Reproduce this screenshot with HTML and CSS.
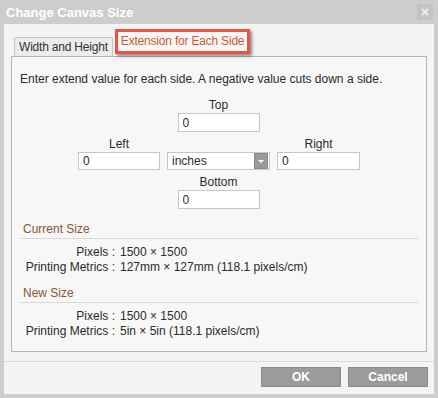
FILE: index.html
```html
<!DOCTYPE html>
<html lang="en">
<head>
    <meta charset="UTF-8">
    <meta name="viewport" content="width=device-width, initial-scale=1.0">
    <title>Change Canvas Size</title>
    <link rel="stylesheet" href="styles.css">
</head>
<body>
    <div class="dialog">
        <div class="titlebar">
            <span class="title">Change Canvas Size</span>
            <span class="close">
                <svg width="8" height="8" viewBox="0 0 8 8"><path d="M1 1 L7 7 M7 1 L1 7" stroke="#ececec" stroke-width="2"/></svg>
            </span>
        </div>

        <div class="dialog-body">
            <div class="tabs">
                <div class="tab">Width and Height</div>
                <div class="tab active">Extension for Each Side</div>
            </div>

            <div class="panel">
                <p class="hint">Enter extend value for each side. A negative value cuts down a side.</p>

                <div class="sides">
                    <span class="side-label top-label">Top</span>
                    <input class="field top-field" type="text" value="0">

                    <span class="side-label left-label">Left</span>
                    <span class="side-label right-label">Right</span>
                    <input class="field left-field" type="text" value="0">
                    <div class="select">
                        <span>inches</span>
                        <span class="select-btn"><svg width="6" height="3" viewBox="0 0 6 3"><path d="M0 0 H6 L3 3 Z" fill="#fff"/></svg></span>
                    </div>
                    <input class="field right-field" type="text" value="0">

                    <span class="side-label bottom-label">Bottom</span>
                    <input class="field bottom-field" type="text" value="0">
                </div>

                <div class="section-title">Current Size</div>
                <div class="info">
                    <span class="info-label">Pixels :</span><span>1500 × 1500</span>
                    <span class="info-label">Printing Metrics :</span><span>127mm × 127mm (118.1 pixels/cm)</span>
                </div>

                <div class="section-title">New Size</div>
                <div class="info">
                    <span class="info-label">Pixels :</span><span>1500 × 1500</span>
                    <span class="info-label">Printing Metrics :</span><span>5in × 5in (118.1 pixels/cm)</span>
                </div>
            </div>

            <div class="footer">
                <button class="btn">OK</button>
                <button class="btn">Cancel</button>
            </div>
        </div>
    </div>
</body>
</html>
```

FILE: styles.css
```css
* {
    box-sizing: border-box;
    margin: 0;
    padding: 0;
}

body {
    background: #cdcdcd;
    font-family: "Liberation Sans", Arial, sans-serif;
    font-size: 12px;
    color: #2b2b2b;
}

.dialog {
    width: 438px;
    height: 398px;
    padding: 0 4px 4px 4px;
}

.titlebar {
    height: 24px;
    display: flex;
    align-items: center;
    justify-content: space-between;
    padding: 0 1px 0 2px;
}

.title {
    color: #fff;
    font-weight: bold;
    font-size: 13px;
}

.close {
    width: 16px;
    height: 16px;
    background: #c3c3c3;
    display: flex;
    align-items: center;
    justify-content: center;
}

.dialog-body {
    background: #f4f4f4;
    height: 370px;
    padding-top: 5px;
}

.tabs {
    display: flex;
    align-items: flex-end;
    height: 27px;
    padding: 0 10px;
}

.tab {
    height: 19px;
    line-height: 18px;
    padding: 0 4px;
    white-space: nowrap;
    letter-spacing: -0.2px;
    background: #ececec;
    border: 1px solid #c4c4c4;
    border-bottom: none;
    border-radius: 2px 2px 0 0;
    color: #333;
}

.tab.active {
    height: 25px;
    line-height: 19px;
    margin: 0 0 2px 2px;
    padding: 0 3px;
    background: #f7f7f7;
    color: #cf5a2c;
    border: 3px solid #ea5440;
    border-radius: 0;
    box-shadow: 2px 2px 3px rgba(0, 0, 0, 0.45);
}

.panel {
    margin: 0 7px;
    height: 296px;
    background: #f7f7f7;
    border: 1px solid #b4b4b4;
    padding: 15px 8px 0 8px;
}

.hint {
    line-height: 15px;
}

.sides {
    display: grid;
    grid-template-columns: 82px 103px 83px;
    grid-template-rows: 17px 19px 20px 18px 20px 19px;
    column-gap: 7px;
    justify-content: center;
    margin-top: 9px;
}

.side-label {
    text-align: center;
    align-self: end;
    line-height: 16px;
}

.top-label { grid-column: 2; grid-row: 1; }
.top-field { grid-column: 2; grid-row: 2; }
.left-label { grid-column: 1; grid-row: 3; }
.right-label { grid-column: 3; grid-row: 3; }
.left-field { grid-column: 1; grid-row: 4; }
.select { grid-column: 2; grid-row: 4; }
.right-field { grid-column: 3; grid-row: 4; }
.bottom-label { grid-column: 2; grid-row: 5; }
.bottom-field { grid-column: 2; grid-row: 6; }

.field {
    width: 100%;
    height: 100%;
    border: 1px solid #c6c6c6;
    background: #fff;
    font: inherit;
    color: #2b2b2b;
    padding: 0 4px;
    outline: none;
}

.top-field,
.bottom-field {
    width: 82px;
    justify-self: center;
}

.select {
    display: flex;
    align-items: center;
    justify-content: space-between;
    border: 1px solid #c6c6c6;
    background: #fff;
    padding: 0 1px 0 4px;
}

.select-btn {
    width: 14px;
    height: 16px;
    background: #999;
    border: 1px solid #8a8a8a;
    display: flex;
    align-items: center;
    justify-content: center;
}

.section-title {
    color: #8b5434;
    line-height: 15px;
    padding: 0 3px 1px;
    border-bottom: 1px solid #d9d9d9;
    margin-top: 13px;
}

.info + .section-title {
    margin-top: 11px;
}

.info {
    display: grid;
    grid-template-columns: 95px 1fr;
    column-gap: 5px;
    line-height: 15px;
    margin-top: 6px;
}

.info-label {
    text-align: right;
}

.footer {
    margin-top: 9px;
    border-top: 1px solid #dcdcdc;
    display: flex;
    justify-content: flex-end;
    gap: 7px;
    padding: 5px 6px 0 0;
}

.btn {
    width: 80px;
    height: 20px;
    background: #9b9b9b;
    border: 1px solid #8a8a8a;
    color: #fff;
    font: bold 12px "Liberation Sans", Arial, sans-serif;
}
```
